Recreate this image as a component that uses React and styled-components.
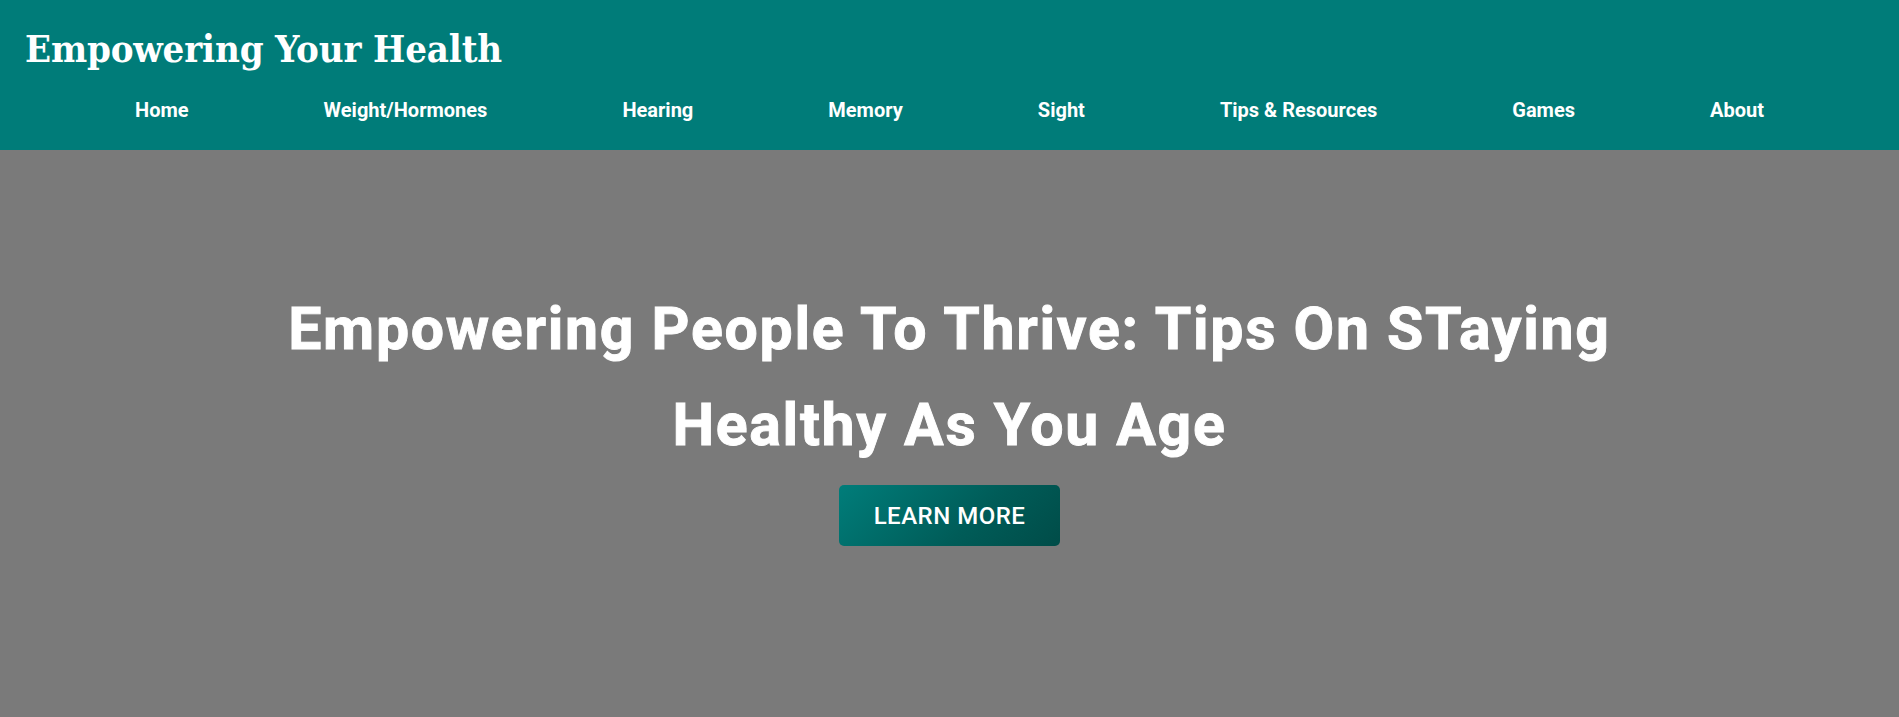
import React from "react";
import styled, { createGlobalStyle } from "styled-components";

const GlobalStyle = createGlobalStyle`
  html, body {
    margin: 0;
    padding: 0;
    background: #7a7a7a;
  }
  body {
    font-family: Roboto, "Liberation Sans", sans-serif;
  }
  * { box-sizing: border-box; }
`;

const Header = styled.header`
  height: 150px;
  background: #007c79;
  padding-top: 26px;
  display: flex;
  flex-direction: column;
`;

const Brand = styled.h1`
  margin: 0;
  padding-left: 25px;
  font-family: "DejaVu Serif Condensed", "DejaVu Serif", "Liberation Serif", serif;
  font-stretch: semi-condensed;
  font-weight: 700;
  font-size: 38px;
  letter-spacing: -0.15px;
  line-height: normal;
  color: #ffffff;
`;

const Nav = styled.nav`
  margin-top: 27px;
  display: flex;
  justify-content: space-evenly;
`;

const NavLink = styled.a`
  font-family: Roboto, "Liberation Sans", sans-serif;
  font-weight: 700;
  font-size: 20px;
  line-height: normal;
  color: #ffffff;
  text-decoration: none;
  cursor: pointer;
`;

const Hero = styled.section`
  min-height: 567px;
  background: #7a7a7a;
  padding-top: 131px;
  display: flex;
  flex-direction: column;
  align-items: center;
`;

const HeroTitle = styled.h2`
  margin: 0;
  max-width: 1460px;
  font-family: Roboto, "Liberation Sans", sans-serif;
  font-weight: 700;
  font-size: 59px;
  letter-spacing: 1.7px;
  line-height: 96px;
  color: #ffffff;
  -webkit-text-stroke: 0.9px #ffffff;
  text-align: center;
`;

const CtaButton = styled.button`
  margin-top: 12px;
  width: 221px;
  height: 61px;
  border: none;
  border-radius: 5px;
  background: linear-gradient(135deg, #007d7a 0%, #005c58 60%, #004c48 100%);
  color: #ffffff;
  font-family: Roboto, "Liberation Sans", sans-serif;
  font-weight: 500;
  font-size: 24px;
  letter-spacing: 0.5px;
  text-transform: uppercase;
  cursor: pointer;
`;

const links = [
  "Home",
  "Weight/Hormones",
  "Hearing",
  "Memory",
  "Sight",
  "Tips & Resources",
  "Games",
  "About",
];

export default function App() {
  return (
    <>
      <GlobalStyle />
      <Header>
        <Brand>Empowering Your Health</Brand>
        <Nav>
          {links.map((l) => (
            <NavLink key={l}>{l}</NavLink>
          ))}
        </Nav>
      </Header>
      <Hero>
        <HeroTitle>
          Empowering People To Thrive: Tips On STaying Healthy As You Age
        </HeroTitle>
        <CtaButton>Learn More</CtaButton>
      </Hero>
    </>
  );
}
